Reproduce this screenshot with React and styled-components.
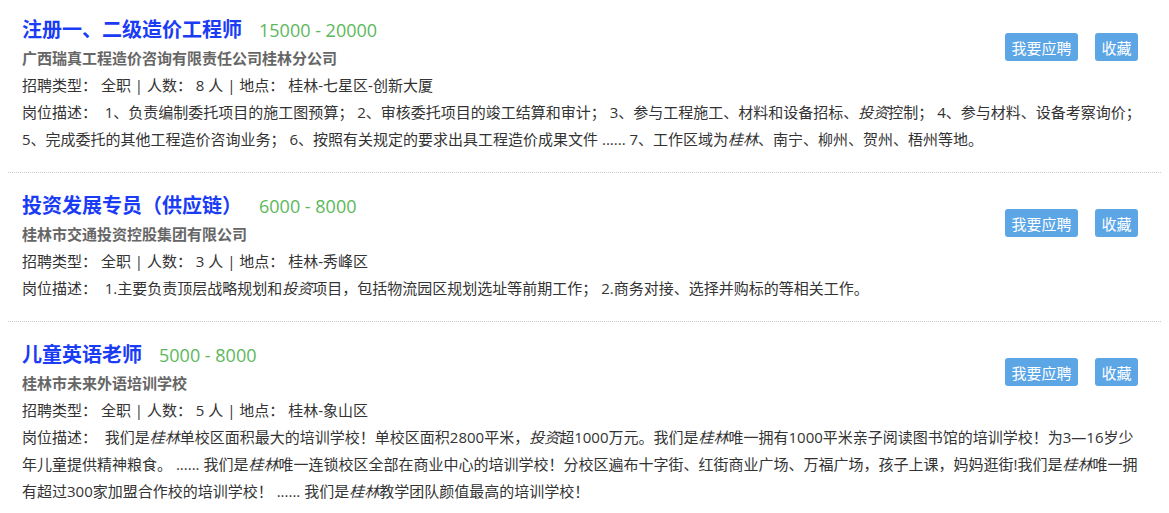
import React from 'react';
import styled, { createGlobalStyle } from 'styled-components';

const GlobalStyle = createGlobalStyle`
  body {
    margin: 0;
    background: #fff;
    font-family: "Open Sans", "Noto Sans CJK SC", sans-serif;
    color: #333;
  }
`;

const List = styled.div`
  padding: 0 8px;
`;

const Item = styled.div`
  padding: 19px 18px 19px 14px;
  border-bottom: 1px dotted #ccc;

  &:first-child {
    padding-top: 16px;
  }

  &:last-child {
    border-bottom: none;
  }
`;

const Actions = styled.div`
  float: right;
  display: flex;
  gap: 17px;
  margin-top: 17px;
  margin-right: 5px;
`;

const Button = styled.button`
  height: 28px;
  padding: 0 6.5px;
  border: none;
  border-radius: 3px;
  background: #5ca6e6;
  color: #fff;
  font: inherit;
  font-size: 15px;
  cursor: pointer;
`;

const TitleRow = styled.div`
  display: flex;
  align-items: baseline;
  gap: 17px;
  height: 28px;
  line-height: 28px;
`;

const Title = styled.a`
  font-size: 20px;
  font-weight: bold;
  color: #1a3cf5;
  text-decoration: none;
`;

const Salary = styled.span`
  font-size: 18px;
  color: #5cb85c;
`;

const Company = styled.div`
  font-size: 15px;
  font-weight: bold;
  color: #666;
  line-height: 28px;
`;

const Line = styled.div`
  font-size: 15px;
  line-height: 27px;
  color: #333;

  em {
    font-style: italic;
  }
`;

const jobs = [
  {
    title: '注册一、二级造价工程师',
    salary: '15000 - 20000',
    company: '广西瑞真工程造价咨询有限责任公司桂林分公司',
    count: 8,
    place: '桂林-七星区-创新大厦',
    desc: (
      <>
        1、负责编制委托项目的施工图预算； 2、审核委托项目的竣工结算和审计； 3、参与工程施工、材料和设备招标、<em>投资</em>控制； 4、参与材料、设备考察询价； 5、完成委托的其他工程造价咨询业务； 6、按照有关规定的要求出具工程造价成果文件 ...... 7、工作区域为<em>桂林</em>、南宁、柳州、贺州、梧州等地。
      </>
    ),
  },
  {
    title: '投资发展专员（供应链）',
    salary: '6000 - 8000',
    company: '桂林市交通投资控股集团有限公司',
    count: 3,
    place: '桂林-秀峰区',
    desc: (
      <>
        1.主要负责顶层战略规划和<em>投资</em>项目，包括物流园区规划选址等前期工作； 2.商务对接、选择并购标的等相关工作。
      </>
    ),
  },
  {
    title: '儿童英语老师',
    salary: '5000 - 8000',
    company: '桂林市未来外语培训学校',
    count: 5,
    place: '桂林-象山区',
    desc: (
      <>
        我们是<em>桂林</em>单校区面积最大的培训学校！单校区面积2800平米，<em>投资</em>超1000万元。我们是<em>桂林</em>唯一拥有1000平米亲子阅读图书馆的培训学校！为3—16岁少年儿童提供精神粮食。 ...... 我们是<em>桂林</em>唯一连锁校区全部在商业中心的培训学校！分校区遍布十字街、红街商业广场、万福广场，孩子上课，妈妈逛街!我们是<em>桂林</em>唯一拥有超过300家加盟合作校的培训学校！ ...... 我们是<em>桂林</em>教学团队颜值最高的培训学校！
      </>
    ),
  },
];

const App = () => (
  <>
    <GlobalStyle />
    <List>
      {jobs.map((job) => (
        <Item key={job.title}>
          <Actions>
            <Button>我要应聘</Button>
            <Button>收藏</Button>
          </Actions>
          <TitleRow>
            <Title href="#">{job.title}</Title>
            <Salary>{job.salary}</Salary>
          </TitleRow>
          <Company>{job.company}</Company>
          <Line>
            招聘类型： 全职 | 人数： {job.count} 人 | 地点： {job.place}
          </Line>
          <Line>岗位描述：&nbsp; {job.desc}</Line>
        </Item>
      ))}
    </List>
  </>
);

export default App;
